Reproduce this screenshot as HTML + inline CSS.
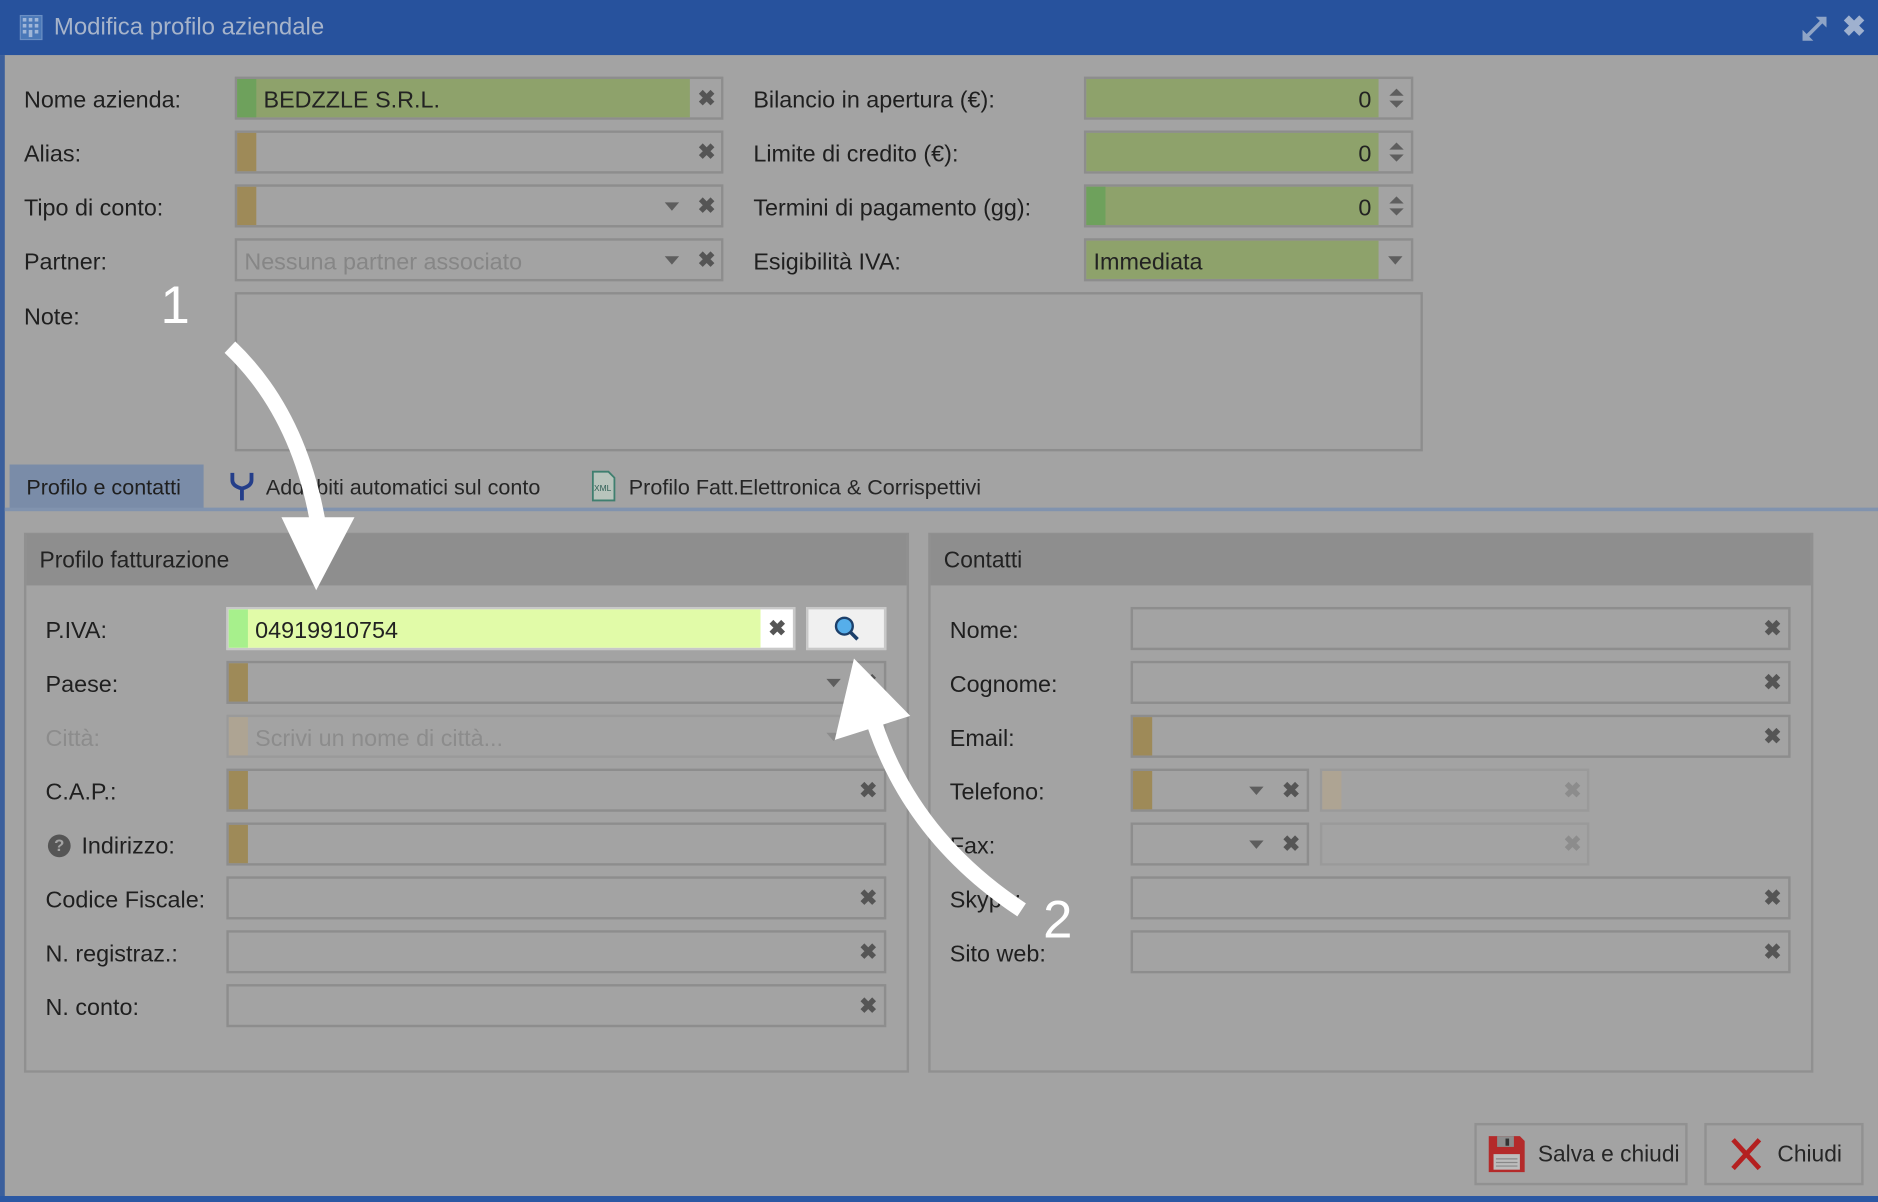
<!DOCTYPE html>
<html><head><meta charset="utf-8"><style>
html,body{margin:0;padding:0;width:1878px;height:1202px;overflow:hidden;background:#a3a3a3}
#w{position:absolute;left:0;top:0;width:1568px;height:1004px;transform:scale(1.19770,1.19721);transform-origin:0 0;background:#a3a3a3;font-family:"Liberation Sans",sans-serif;color:#222}
.a{position:absolute}
.lbl{position:absolute;font-size:19.5px;line-height:36px;color:#1f1f1f;margin-top:2px}
.in{position:absolute;box-sizing:border-box;border:2px solid #8d8d8d;height:36px;background:#a3a3a3}
.st{position:absolute;left:0;top:0;bottom:0;width:16px;background:#9e8a58}
.x{position:absolute;top:0;width:28px;height:32px;line-height:32px;text-align:center;font-size:18px;color:#555;font-weight:bold}
.dd{position:absolute;top:13px;width:0;height:0;border-left:6px solid transparent;border-right:6px solid transparent;border-top:7px solid #5e5e5e}
.txt{position:absolute;left:20px;top:2px;line-height:32px;font-size:19.5px}
</style></head><body><div id="w">
<div class="a" style="left:0;top:0;width:1568px;height:46px;background:#27529d"></div>
<div class="a" style="left:0;top:46px;width:4px;height:958px;background:#3b5f9c"></div>
<div class="a" style="left:0;top:999px;width:1568px;height:5px;background:#2b58a3"></div>
<svg class="a" style="left:16px;top:12px" width="20" height="22" viewBox="0 0 20 22"><rect x="1" y="1" width="18" height="20" fill="#4a78b8" stroke="#6b8fc4"/><g fill="#9fb6d8"><rect x="3" y="3" width="3" height="3"/><rect x="8" y="3" width="3" height="3"/><rect x="13" y="3" width="3" height="3"/><rect x="3" y="8" width="3" height="3"/><rect x="8" y="8" width="3" height="3"/><rect x="13" y="8" width="3" height="3"/><rect x="3" y="13" width="3" height="3"/><rect x="8" y="13" width="3" height="6"/><rect x="13" y="13" width="3" height="3"/></g></svg>
<div class="a" style="left:45px;top:9px;font-size:20px;color:#a7b4ca;line-height:28px">Modifica profilo aziendale</div>
<svg class="a" style="left:1503px;top:12px" width="24" height="24" viewBox="0 0 24 24"><g stroke="#8fa4c6" stroke-width="3" fill="none"><path d="M4 20 L20 4"/></g><path d="M13 2 L22 2 L22 11Z M2 13 L2 22 L11 22Z" fill="#8fa4c6"/></svg>
<div class="a" style="left:1538px;top:8px;font-size:24px;color:#9fb1cf;font-weight:bold">✖</div>

<div class="lbl" style="left:20px;top:64px">Nome azienda:</div>
<div class="lbl" style="left:20px;top:109px">Alias:</div>
<div class="lbl" style="left:20px;top:154px">Tipo di conto:</div>
<div class="lbl" style="left:20px;top:199px">Partner:</div>
<div class="lbl" style="left:20px;top:245px">Note:</div>

<div class="in" style="left:196px;top:64px;width:408px"><div class="a" style="left:0;top:0;width:378px;height:32px;background:#8ea26b"></div><div class="st" style="background:#6ea15c"></div><div class="txt" style="left:22px">BEDZZLE S.R.L.</div><div class="x" style="left:378px">✖</div></div>
<div class="in" style="left:196px;top:109px;width:408px"><div class="st"></div><div class="x" style="left:378px">✖</div></div>
<div class="in" style="left:196px;top:154px;width:408px"><div class="st"></div><div class="dd" style="left:357px"></div><div class="x" style="left:378px">✖</div></div>
<div class="in" style="left:196px;top:199px;width:408px"><div class="txt" style="left:6px;color:#868686">Nessuna partner associato</div><div class="dd" style="left:357px"></div><div class="x" style="left:378px">✖</div></div>
<div class="in" style="left:196px;top:244px;width:992px;height:133px"></div>

<div class="lbl" style="left:629px;top:64px">Bilancio in apertura (€):</div>
<div class="lbl" style="left:629px;top:109px">Limite di credito (€):</div>
<div class="lbl" style="left:629px;top:154px">Termini di pagamento (gg):</div>
<div class="lbl" style="left:629px;top:199px">Esigibilità IVA:</div>

<div class="in" style="left:905px;top:64px;width:275px"><div class="a" style="left:0;top:0;width:244px;height:32px;background:#8ea26b"></div><div class="a" style="left:200px;top:2px;width:38px;text-align:right;line-height:32px;font-size:19.5px">0</div><div class="a" style="left:253px;top:8px;border-left:6px solid transparent;border-right:6px solid transparent;border-bottom:6px solid #5e5e5e"></div><div class="a" style="left:253px;top:18px;border-left:6px solid transparent;border-right:6px solid transparent;border-top:6px solid #5e5e5e"></div></div>
<div class="in" style="left:905px;top:109px;width:275px"><div class="a" style="left:0;top:0;width:244px;height:32px;background:#8ea26b"></div><div class="a" style="left:200px;top:2px;width:38px;text-align:right;line-height:32px;font-size:19.5px">0</div><div class="a" style="left:253px;top:8px;border-left:6px solid transparent;border-right:6px solid transparent;border-bottom:6px solid #5e5e5e"></div><div class="a" style="left:253px;top:18px;border-left:6px solid transparent;border-right:6px solid transparent;border-top:6px solid #5e5e5e"></div></div>
<div class="in" style="left:905px;top:154px;width:275px"><div class="a" style="left:0;top:0;width:244px;height:32px;background:#8ea26b"></div><div class="st" style="background:#6ea15c"></div><div class="a" style="left:200px;top:2px;width:38px;text-align:right;line-height:32px;font-size:19.5px">0</div><div class="a" style="left:253px;top:8px;border-left:6px solid transparent;border-right:6px solid transparent;border-bottom:6px solid #5e5e5e"></div><div class="a" style="left:253px;top:18px;border-left:6px solid transparent;border-right:6px solid transparent;border-top:6px solid #5e5e5e"></div></div>
<div class="in" style="left:905px;top:199px;width:275px"><div class="a" style="left:0;top:0;width:244px;height:32px;background:#8ea26b"></div><div class="txt" style="left:6px">Immediata</div><div class="dd" style="left:252px"></div></div>

<div class="a" style="left:8px;top:388px;width:162px;height:37px;background:#7a8ca8"></div>
<div class="a" style="left:22px;top:389px;line-height:37px;font-size:18px;color:#1f1f1f">Profilo e contatti</div>
<svg class="a" style="left:190px;top:393px" width="24" height="26" viewBox="0 0 24 26"><path d="M4 2 L4 8 Q4 13 12 15 Q20 13 20 8 L20 2 M12 15 L12 25" stroke="#243e8a" stroke-width="3.2" fill="none"/></svg>
<div class="a" style="left:222px;top:389px;line-height:37px;font-size:18px;color:#262626">Addebiti automatici sul conto</div>
<svg class="a" style="left:492px;top:393px" width="24" height="26" viewBox="0 0 24 26"><path d="M3 1 L16 1 L21 6 L21 25 L3 25Z" fill="#b8c4bc" stroke="#3f7f6f" stroke-width="1.5"/><text x="4" y="17" font-size="7" font-family="Liberation Sans" fill="#2f5f55">XML</text></svg>
<div class="a" style="left:525px;top:389px;line-height:37px;font-size:18px;color:#262626">Profilo Fatt.Elettronica &amp; Corrispettivi</div>
<div class="a" style="left:4px;top:424px;width:1564px;height:3px;background:#8193ae"></div>

<div class="a" style="left:20px;top:445px;width:735px;height:447px;border:2px solid #909090;box-sizing:content-box"></div>
<div class="a" style="left:22px;top:446px;width:735px;height:43px;background:#8e8e8e"></div>
<div class="a" style="left:33px;top:447px;line-height:43px;font-size:19px;color:#222">Profilo fatturazione</div>

<div class="lbl" style="left:38px;top:507px">P.IVA:</div>
<div class="lbl" style="left:38px;top:552px">Paese:</div>
<div class="lbl" style="left:38px;top:597px;color:#8c8c8c">Città:</div>
<div class="lbl" style="left:38px;top:642px">C.A.P.:</div>
<div class="a" style="left:40px;top:697px;width:19px;height:19px;border-radius:50%;background:#555;color:#a3a3a3;font-size:14px;font-weight:bold;text-align:center;line-height:19px">?</div>
<div class="lbl" style="left:68px;top:687px">Indirizzo:</div>
<div class="lbl" style="left:38px;top:732px">Codice Fiscale:</div>
<div class="lbl" style="left:38px;top:777px">N. registraz.:</div>
<div class="lbl" style="left:38px;top:822px">N. conto:</div>

<div class="in" style="left:189px;top:507px;width:475px;border-color:#c8c8c8;background:#fff"><div class="a" style="left:0;top:0;width:444px;height:32px;background:#e1fba8"></div><div class="st" style="background:#a7f08c"></div><div class="txt" style="left:22px">04919910754</div><div class="x" style="left:444px">✖</div></div>
<div class="in" style="left:673px;top:507px;width:67px;border-color:#c8c8c8;background:#f0f0f0"><svg class="a" style="left:20px;top:4px" width="24" height="24" viewBox="0 0 24 24"><circle cx="10" cy="10" r="7" fill="#56aeea" stroke="#1c3f6a" stroke-width="2"/><path d="M15 15 L21 21" stroke="#1c3f6a" stroke-width="3"/></svg></div>
<div class="in" style="left:189px;top:552px;width:551px"><div class="st"></div><div class="dd" style="left:499px"></div><div class="x" style="left:520px">✖</div></div>
<div class="in" style="left:189px;top:597px;width:551px;border-color:#9a9a9a"><div class="st" style="background:#aea493"></div><div class="txt" style="left:22px;color:#8c8c8c">Scrivi un nome di città...</div><div class="dd" style="left:499px;border-top-color:#8c8c8c"></div></div>
<div class="in" style="left:189px;top:642px;width:551px"><div class="st"></div><div class="x" style="left:520px">✖</div></div>
<div class="in" style="left:189px;top:687px;width:551px"><div class="st"></div></div>
<div class="in" style="left:189px;top:732px;width:551px"><div class="x" style="left:520px">✖</div></div>
<div class="in" style="left:189px;top:777px;width:551px"><div class="x" style="left:520px">✖</div></div>
<div class="in" style="left:189px;top:822px;width:551px"><div class="x" style="left:520px">✖</div></div>

<div class="a" style="left:775px;top:445px;width:735px;height:447px;border:2px solid #909090;box-sizing:content-box"></div>
<div class="a" style="left:777px;top:446px;width:735px;height:43px;background:#8e8e8e"></div>
<div class="a" style="left:788px;top:447px;line-height:43px;font-size:19px;color:#222">Contatti</div>

<div class="lbl" style="left:793px;top:507px">Nome:</div>
<div class="lbl" style="left:793px;top:552px">Cognome:</div>
<div class="lbl" style="left:793px;top:597px">Email:</div>
<div class="lbl" style="left:793px;top:642px">Telefono:</div>
<div class="lbl" style="left:793px;top:687px">Fax:</div>
<div class="lbl" style="left:793px;top:732px">Skype:</div>
<div class="lbl" style="left:793px;top:777px">Sito web:</div>

<div class="in" style="left:944px;top:507px;width:551px"><div class="x" style="left:520px">✖</div></div>
<div class="in" style="left:944px;top:552px;width:551px"><div class="x" style="left:520px">✖</div></div>
<div class="in" style="left:944px;top:597px;width:551px"><div class="st"></div><div class="x" style="left:520px">✖</div></div>
<div class="in" style="left:944px;top:642px;width:149px"><div class="st"></div><div class="dd" style="left:97px"></div><div class="x" style="left:118px">✖</div></div>
<div class="in" style="left:1102px;top:642px;width:225px;border-color:#9a9a9a"><div class="st" style="background:#aea493"></div><div class="x" style="left:195px;color:#8c8c8c">✖</div></div>
<div class="in" style="left:944px;top:687px;width:149px"><div class="dd" style="left:97px"></div><div class="x" style="left:118px">✖</div></div>
<div class="in" style="left:1102px;top:687px;width:225px;border-color:#9a9a9a"><div class="x" style="left:195px;color:#8c8c8c">✖</div></div>
<div class="in" style="left:944px;top:732px;width:551px"><div class="x" style="left:520px">✖</div></div>
<div class="in" style="left:944px;top:777px;width:551px"><div class="x" style="left:520px">✖</div></div>

<div class="a" style="left:1231px;top:938px;width:178px;height:52px;box-sizing:border-box;border:2px solid #919191"></div>
<svg class="a" style="left:1242px;top:948px" width="32" height="32" viewBox="0 0 32 32"><path d="M1 1 L27 1 L31 5 L31 31 L1 31Z" fill="#b42a2a"/><rect x="8" y="1" width="14" height="9" fill="#8c8c8c"/><rect x="15" y="3" width="3" height="6" fill="#333"/><rect x="5" y="16" width="22" height="13" fill="#bdbdbd"/><path d="M7 20 H25 M7 23 H25 M7 26 H25" stroke="#888" stroke-width="1"/></svg>
<div class="a" style="left:1284px;top:939px;line-height:52px;font-size:19px;color:#262626">Salva e chiudi</div>
<div class="a" style="left:1423px;top:938px;width:133px;height:52px;box-sizing:border-box;border:2px solid #919191"></div>
<svg class="a" style="left:1444px;top:950px" width="28" height="28" viewBox="0 0 28 28"><path d="M3 2 L25 26 M25 2 L3 26" stroke="#b42020" stroke-width="4"/></svg>
<div class="a" style="left:1484px;top:939px;line-height:52px;font-size:19px;color:#262626">Chiudi</div>

<svg class="a" style="left:0;top:0" width="1568" height="1004">
<path d="M192 290 Q250 345 266 440" stroke="#fff" stroke-width="13" fill="none"/>
<polygon points="235,432 296,432 264,493" fill="#fff"/>
<path d="M853 760 Q762 700 730 604" stroke="#fff" stroke-width="13" fill="none"/>
<polygon points="713,550 697,618 760,598" fill="#fff"/>
<text x="134" y="270" font-family="Liberation Sans" font-size="44" fill="#fff">1</text>
<text x="871" y="783" font-family="Liberation Sans" font-size="44" fill="#fff">2</text>
</svg>
</div></body></html>
